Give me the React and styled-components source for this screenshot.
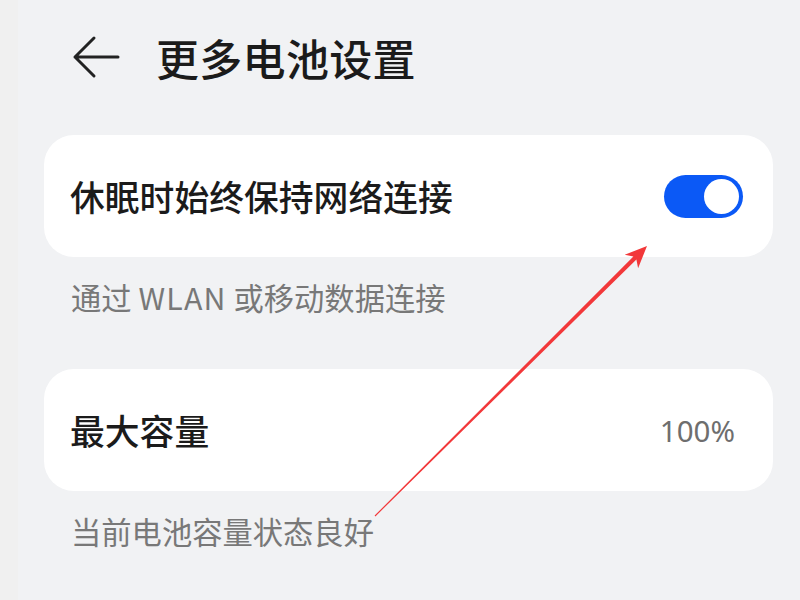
import React from 'react';
import styled, { createGlobalStyle } from 'styled-components';

const GlobalStyle = createGlobalStyle`
  html, body {
    margin: 0;
    padding: 0;
  }
  body {
    width: 800px;
    height: 600px;
    overflow: hidden;
    background: linear-gradient(to right, #f0f0f0 0, #f0f0f0 18px, #f1f2f4 18px);
    font-family: "Noto Sans CJK SC", "Noto Sans", sans-serif;
    -webkit-font-smoothing: antialiased;
  }
`;

const Screen = styled.div`
  position: relative;
  width: 800px;
  height: 600px;
  padding: 0 27px 0 44px;
  box-sizing: border-box;
`;

const Header = styled.header`
  height: 114px;
  display: flex;
  align-items: center;
  margin-bottom: 21px;
`;

const BackButton = styled.button`
  width: 50px;
  height: 50px;
  margin-left: 27px;
  padding: 0;
  border: none;
  background: none;
  display: flex;
  align-items: center;
  justify-content: center;
`;

const Title = styled.h1`
  margin: 0 0 0 35px;
  font-size: 43px;
  font-weight: 500;
  color: #1b1b1b;
  letter-spacing: 0.3px;
`;

const Group = styled.section`
  display: flex;
  flex-direction: column;
  margin-bottom: 32px;
`;

const Card = styled.div`
  height: 122px;
  background: #ffffff;
  border-radius: 30px;
  display: flex;
  align-items: center;
  justify-content: space-between;
  padding: 0 ${props => props.padRight}px 0 26px;
`;

const Label = styled.span`
  font-size: 34.8px;
  font-weight: 500;
  color: #1b1b1b;
`;

const Value = styled.span`
  font-family: "Noto Sans", "Noto Sans CJK SC", sans-serif;
  font-size: 29.5px;
  color: #6e6e6e;
`;

const Note = styled.p`
  margin: 0;
  height: 80px;
  line-height: 80px;
  padding-left: 27px;
  font-size: 30.3px;
  color: #787878;
  white-space: pre;
`;

const Latin = styled.span`
  letter-spacing: 1.2px;
`;

const Switch = styled.div`
  width: 79px;
  height: 43px;
  border-radius: 22px;
  background: #0b59f6;
  box-sizing: border-box;
  padding: 4px;
  display: flex;
  justify-content: ${props => (props.on ? 'flex-end' : 'flex-start')};
`;

const Knob = styled.div`
  width: 35px;
  height: 35px;
  border-radius: 50%;
  background: #ffffff;
`;

const Annotation = styled.svg`
  position: absolute;
  left: 0;
  top: 0;
  pointer-events: none;
`;

const BackIcon = () => (
  <svg width="50" height="50" viewBox="0 0 50 50">
    <path d="M23 15 L4 34 L23 53 M4 34 L47 34" transform="translate(0 -9)" fill="none" stroke="#222" strokeWidth="3" strokeLinecap="round" strokeLinejoin="round" />
  </svg>
);

export default function App() {
  return (
    <>
      <GlobalStyle />
      <Screen>
        <Header>
          <BackButton aria-label="返回">
            <BackIcon />
          </BackButton>
          <Title>更多电池设置</Title>
        </Header>

        <Group>
          <Card padRight={30}>
            <Label>休眠时始终保持网络连接</Label>
            <Switch on>
              <Knob />
            </Switch>
          </Card>
          <Note>通过 <Latin>WLAN</Latin> 或移动数据连接</Note>
        </Group>

        <Group>
          <Card padRight={38}>
            <Label>最大容量</Label>
            <Value>100%</Value>
          </Card>
          <Note>当前电池容量状态良好</Note>
        </Group>

        <Annotation width="800" height="600" viewBox="0 0 800 600">
          <polygon
            points="647,246 638.1,268.2 636.4,259.6 375.4,516.4 374.6,515.6 633.4,256.4 624.7,254.8"
            fill="#f2383a"
          />
        </Annotation>
      </Screen>
    </>
  );
}
